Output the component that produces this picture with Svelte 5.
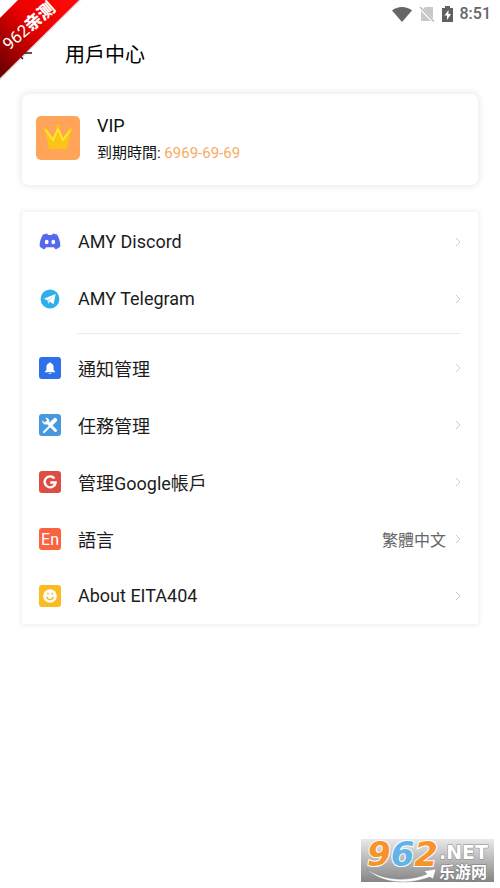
<script lang="ts">
    interface Item {
        id: string;
        label: string;
        value?: string;
    }

    const social: Item[] = [
        { id: 'discord', label: 'AMY Discord' },
        { id: 'telegram', label: 'AMY Telegram' },
    ];

    const settings: Item[] = [
        { id: 'notify', label: '通知管理' },
        { id: 'tasks', label: '任務管理' },
        { id: 'google', label: '管理Google帳戶' },
        { id: 'language', label: '語言', value: '繁體中文' },
        { id: 'about', label: 'About EITA404' },
    ];
</script>

{#snippet icon(id: string)}
    <svg class="icon" viewBox="0 0 22 22" aria-hidden="true">
        {#if id === 'discord'}
            <path d="M4 3.6 8.2 2.4 9 4h4l.8-1.6L18 3.6c2 3 3.6 7.4 3.3 11.8-1.5 1.5-3.2 2.4-5 2.9l-1.3-2.1H7l-1.3 2.1c-1.8-.5-3.5-1.4-5-2.9C.4 11 2 6.6 4 3.6z" fill="#5468f0" />
            <ellipse cx="7.7" cy="11" rx="1.9" ry="2.2" fill="#fff" />
            <ellipse cx="14.3" cy="11" rx="1.9" ry="2.2" fill="#fff" />
        {:else if id === 'telegram'}
            <circle cx="11" cy="11" r="9.4" fill="#2eaeea" />
            <path d="M4.8 10.8 16.6 6 14.6 16.3 11 13.8 9.2 15.8 8.6 12.3z" fill="#fff" />
            <path d="M8.6 12.3 14.3 8.2 10 12.9 9.2 15.8z" fill="#b9dff2" />
        {:else if id === 'notify'}
            <rect width="22" height="22" rx="3" fill="#2d70ea" />
            <path d="M11 5.3c.6 0 .9.4.9.9 1.9.5 2.7 2 2.7 4v2.9l1.6 1.7v.5H5.8v-.5l1.6-1.7v-2.9c0-2 .8-3.5 2.7-4 0-.5.3-.9.9-.9zM9.6 15.9h2.8c-.3 1.2-2.5 1.2-2.8 0z" fill="#fff" />
        {:else if id === 'tasks'}
            <rect width="22" height="22" rx="3" fill="#4799df" />
            <path d="M5 18 15.5 7.5" stroke="#fff" stroke-width="2" stroke-linecap="round" />
            <path d="M12.5 9.5 16.2 5.8" stroke="#fff" stroke-width="4" stroke-linecap="round" />
            <path d="M8 8 16.5 16.5" stroke="#fff" stroke-width="3" stroke-linecap="round" />
            <path d="M3.3 6.2 6 8.7 8.3 6.6 6.2 3.8c2.5-.4 4.7 1.6 4.2 4.3L8 10.5c-2.8.6-5.1-1.7-4.7-4.3z" fill="#fff" />
        {:else if id === 'google'}
            <rect width="22" height="22" rx="3" fill="#dc4e44" />
            <path d="M15.4 7.4A5.5 5.5 0 1 0 16.6 11.5H11.3" fill="none" stroke="#fff" stroke-width="2.4" />
        {:else if id === 'language'}
            <rect width="22" height="22" rx="3" fill="#fa6340" />
            <text class="en" x="11" y="17" text-anchor="middle">En</text>
        {:else}
            <rect width="22" height="22" rx="3" fill="#fbbb22" />
            <circle cx="11" cy="11" r="6.8" fill="#fff" />
            <path d="M8.9 7.7v2M13.1 7.7v2M7.7 11.6c.6 4 6 4 6.6 0" fill="none" stroke="#fbbb22" stroke-width="1.4" />
        {/if}
    </svg>
{/snippet}

{#snippet row(item: Item)}
    <li>
        <a class="row" href="#{item.id}">
            {@render icon(item.id)}
            <span class="label">{item.label}</span>
            {#if item.value}
                <span class="value">{item.value}</span>
            {/if}
            <svg class="chevron" viewBox="0 0 6 10" aria-hidden="true">
                <path d="M1 1 5 5 1 9" fill="none" stroke="#ccc" />
            </svg>
        </a>
    </li>
{/snippet}

<div class="page">
    <div class="status">
        <svg width="20" height="16" viewBox="0 0 20 16" aria-hidden="true">
            <path d="M0 4.5C5-.3 15-.3 20 4.5L10 16z" fill="#666" />
        </svg>
        <svg width="16" height="16" viewBox="0 0 16 16" aria-hidden="true">
            <path d="M6 1h8v14H2V5z" fill="#c9c9c9" />
            <path d="M0 1 15 16" stroke="#fff" stroke-width="3" />
            <path d="M1 1 15 15.5" stroke="#b5b5b5" stroke-width="1.2" />
        </svg>
        <svg width="11" height="16" viewBox="0 0 11 16" aria-hidden="true">
            <path d="M3 0h5v2h3v14H0V2h3z" fill="#606060" />
            <path d="M6.5 4 2.5 9.5H5V14l4-6H6.5z" fill="#fff" />
        </svg>
        <span class="clock">8:51</span>
    </div>

    <header>
        <button class="back" aria-label="返回">
            <svg width="16" height="14" viewBox="0 0 16 14" aria-hidden="true">
                <path d="M16 7H1M7 1 1 7 7 13" fill="none" stroke="#222" stroke-width="1.5" />
            </svg>
        </button>
        <h1>用戶中心</h1>
    </header>

    <section class="card vip">
        <svg class="crown" viewBox="0 0 44 44" aria-hidden="true">
            <rect width="44" height="44" rx="5" fill="#ffa458" />
            <path d="M9 13 13 33H31L35 13 27 22 22 11 17 22z" fill="#fcc419" />
            <path d="M9 13 17 24 22 13 27 24 35 13" fill="none" stroke="#ffe32b" stroke-width="2.2" />
            <circle cx="22" cy="10.5" r="2" fill="#fcc419" />
            <circle cx="9" cy="13" r="1.5" fill="#fcc419" />
            <circle cx="35" cy="13" r="1.5" fill="#fcc419" />
        </svg>
        <div>
            <h2>VIP</h2>
            <p>到期時間: <span class="date">6969-69-69</span></p>
        </div>
    </section>

    <nav class="card menu">
        <ul>
            {#each social as item (item.id)}
                {@render row(item)}
            {/each}
        </ul>
        <hr />
        <ul>
            {#each settings as item (item.id)}
                {@render row(item)}
            {/each}
        </ul>
    </nav>

    <svg class="ribbon" viewBox="0 0 84 84" role="img" aria-label="962亲测">
        <defs>
            <linearGradient id="red" gradientUnits="userSpaceOnUse" x1="68" y1="0" x2="0" y2="68">
                <stop offset="0" stop-color="#ff0808" />
                <stop offset="0.45" stop-color="#e90000" />
                <stop offset="1" stop-color="#700000" />
            </linearGradient>
        </defs>
        <path d="M18 0H81L0 80V18z" fill="#000" opacity="0.15" />
        <path d="M18 0H79L0 78V18z" fill="url(#red)" />
        <text class="ribbon-text" transform="translate(9 51) rotate(-41)">962<tspan class="heavy">亲测</tspan></text>
    </svg>

    <div class="logo">
        <svg viewBox="0 0 133 43" role="img" aria-label="962.NET 乐游网">
            <defs>
                <linearGradient id="grey" x1="0" y1="0" x2="0" y2="1">
                    <stop offset="0" stop-color="#e9e9e9" />
                    <stop offset="1" stop-color="#858585" />
                </linearGradient>
            </defs>
            <rect width="133" height="43" fill="url(#grey)" />
            <path d="M6 30C22 42 48 43 66 35L63 32 75 30 72 40 69 38C48 46 20 45 6 30z" fill="#fff" stroke="#888" stroke-width="0.5" />
            <text class="digits" x="6" y="27"><tspan fill="#f7932b">9</tspan><tspan fill="#62b4e8">6</tspan><tspan fill="#f7932b">2</tspan></text>
            <text class="net" x="78" y="20">.NET</text>
            <text class="site" x="78" y="39">乐游网</text>
        </svg>
    </div>
</div>

<style>
    :global(body) {
        margin: 0;
        background: #fff;
    }
    .page {
        position: relative;
        box-sizing: border-box;
        min-height: 100vh;
        font-family: Roboto, "Noto Sans CJK TC", sans-serif;
        color: #1c1c1c;
    }
    .status {
        display: flex;
        align-items: center;
        justify-content: flex-end;
        gap: 7px;
        height: 27px;
        padding-right: 9px;
    }
    .clock {
        font-size: 16px;
        font-weight: 500;
        color: #666;
    }
    header {
        display: flex;
        align-items: center;
        gap: 33px;
        height: 52px;
        padding-left: 16px;
    }
    .back {
        display: flex;
        padding: 0;
        border: 0;
        background: none;
    }
    h1 {
        margin: 0;
        font-size: 20px;
        font-weight: 400;
        color: #000;
    }
    .card {
        margin: 0 22px;
        background: #fff;
        box-shadow: 0 0 6px 2px rgba(0, 0, 0, 0.08);
    }
    .vip {
        display: flex;
        align-items: flex-start;
        gap: 17px;
        margin-top: 15px;
        padding: 21px 14px 20px;
        border-radius: 7px;
    }
    .crown {
        width: 44px;
        height: 46px;
    }
    h2 {
        margin: 0;
        font-size: 18px;
        font-weight: 400;
        line-height: 22px;
        color: #111;
    }
    p {
        margin: 4px 0 0;
        font-size: 15px;
        line-height: 24px;
        color: #111;
    }
    .date {
        color: #f7ab66;
    }
    .menu {
        margin-top: 27px;
        padding: 1px 17px 0;
        box-shadow: 0 0 5px 1px rgba(0, 0, 0, 0.08);
    }
    ul {
        margin: 0;
        padding: 0;
        list-style: none;
    }
    hr {
        height: 1px;
        margin: 6px 0 5px 38px;
        border: 0;
        background: #ebebeb;
    }
    .row {
        display: flex;
        align-items: center;
        height: 57px;
        color: inherit;
        text-decoration: none;
    }
    .icon {
        width: 22px;
        height: 22px;
        margin-right: 17px;
    }
    .label {
        flex: 1;
        font-size: 18px;
    }
    .value {
        margin-right: 9px;
        font-size: 16px;
        color: #666;
    }
    .chevron {
        width: 6px;
        height: 10px;
    }
    .en {
        font-size: 16px;
        fill: #fff;
    }
    .ribbon {
        position: absolute;
        top: 0;
        left: 0;
        width: 84px;
        height: 84px;
        overflow: visible;
    }
    .ribbon-text {
        font-family: Roboto, "Noto Sans CJK SC", sans-serif;
        font-size: 17px;
        fill: #fff;
    }
    .heavy {
        font-weight: 900;
    }
    .logo {
        position: absolute;
        right: 6px;
        bottom: 6px;
        width: 133px;
    }
    .logo svg {
        display: block;
        overflow: visible;
    }
    .digits {
        font-family: "DejaVu Sans", sans-serif;
        font-size: 34px;
        font-style: italic;
        font-weight: 700;
        stroke: #fff;
        stroke-width: 2px;
        paint-order: stroke;
    }
    .net {
        font-family: "DejaVu Sans", sans-serif;
        font-size: 19px;
        font-weight: 700;
        fill: #fff;
        stroke: #888;
        stroke-width: 1px;
        paint-order: stroke;
    }
    .site {
        font-family: "Noto Sans CJK SC", sans-serif;
        font-size: 16px;
        font-weight: 700;
        fill: #fff;
        stroke: #777;
        stroke-width: 1px;
        paint-order: stroke;
    }
</style>
